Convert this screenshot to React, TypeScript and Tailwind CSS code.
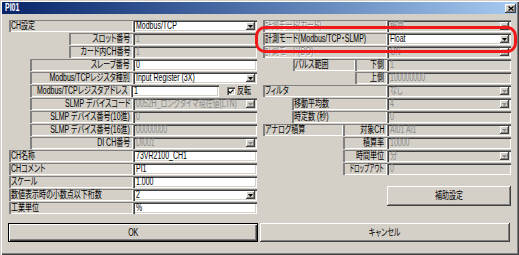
import type { ReactNode } from "react";

const sunken =
  "shadow-[inset_1px_1px_0_#808080,inset_2px_2px_0_#404040,inset_-1px_-1px_0_#ffffff,inset_-2px_-2px_0_#d4d0c8]";
const raised =
  "shadow-[inset_-1px_-1px_0_#404040,inset_1px_1px_0_#ffffff,inset_-2px_-2px_0_#808080]";
const panel = "shadow-[inset_2px_1px_0_#808080,inset_-1px_-1px_0_#ffffff]";

// the source screenshot is squeezed sideways, so every text run is narrowed
const T = ({
  children,
  align = "left",
  narrow = false,
  className = "",
}: {
  children: ReactNode;
  align?: "left" | "right" | "center";
  narrow?: boolean;
  className?: string;
}) => {
  const origin = align === "right" ? "origin-right" : align === "center" ? "origin-center" : "origin-left";
  return (
    <span className={`inline-block whitespace-nowrap ${narrow ? "scale-x-[0.56]" : "scale-x-[0.7]"} ${origin} ${className}`}>
      {children}
    </span>
  );
};

const Label = ({
  children,
  className = "",
  right = false,
  disabled = false,
  narrow = false,
}: {
  children: ReactNode;
  className?: string;
  right?: boolean;
  disabled?: boolean;
  narrow?: boolean;
}) => (
  <div
    className={`h-full flex items-center overflow-hidden ${panel} ${right ? "justify-end pr-[3px]" : "pl-[2px]"} ${
      disabled ? "text-[#808080] [text-shadow:1px_1px_0_#ffffff]" : ""
    } ${className}`}
  >
    <T align={right ? "right" : "left"} narrow={narrow}>
      {children}
    </T>
  </div>
);

const Field = ({ value, disabled = false, className = "w-[124px]" }: { value: string; disabled?: boolean; className?: string }) => (
  <div
    className={`h-full flex items-center pl-[3px] overflow-hidden ${sunken} ${
      disabled ? "bg-[#d4d0c8] text-[#8a8a8a]" : "bg-white"
    } ${className}`}
  >
    <T>{value}</T>
  </div>
);

const DropBtn = ({ disabled = false }: { disabled?: boolean }) => (
  <div className={`w-[9px] h-full shrink-0 flex items-center justify-center bg-[#d4d0c8] ${raised}`}>
    <svg width="5" height="3" viewBox="0 0 5 3">
      <polygon points="0,0 5,0 2.5,3" fill={disabled ? "#8a8a8a" : "#000000"} />
    </svg>
  </div>
);

const Select = ({ value, disabled = false, className = "w-[124px]" }: { value: string; disabled?: boolean; className?: string }) => (
  <div
    className={`h-full flex items-center pl-[3px] pr-[2px] py-[2px] ${sunken} ${
      disabled ? "bg-[#d4d0c8] text-[#8a8a8a]" : "bg-white"
    } ${className}`}
  >
    <div className="flex-1 min-w-0 overflow-hidden">
      <T>{value}</T>
    </div>
    <DropBtn disabled={disabled} />
  </div>
);

const Row = ({ children }: { children: ReactNode }) => <div className="h-[12px] flex shrink-0">{children}</div>;

export default function App() {
  return (
    <div className="relative w-[519px] h-[255px] overflow-hidden bg-[#d4d0c8] p-[2px] text-black text-[10px] leading-[12px] font-['Liberation_Sans','Noto_Sans_CJK_JP',sans-serif] [font-feature-settings:'palt'] shadow-[inset_1px_1px_0_#d4d0c8,inset_2px_2px_0_#ffffff,inset_-1px_-1px_0_#404040,inset_-2px_-2px_0_#808080]">
      <div className="h-[12px] flex items-center justify-between pl-[3px] pr-[1px] bg-linear-to-r from-[#0a246a] to-[#a6caf0]">
        <T className="font-bold text-white">PI01</T>
        <div className={`w-[11px] h-[9px] flex items-center justify-center bg-[#d4d0c8] ${raised}`}>
          <svg width="6" height="5" viewBox="0 0 6 5">
            <path d="M0.5 0.5 L5.5 4.5 M5.5 0.5 L0.5 4.5" stroke="#000" strokeWidth="1.3" />
          </svg>
        </div>
      </div>

      <div className="flex gap-[6px] pl-[7px] pt-[6px]">
        <div className="w-[248px] flex flex-col gap-[1px]">
          <Row>
            <Label className="w-[124px]">CH設定</Label>
            <Select value="Modbus/TCP" />
          </Row>
          <Row>
            <div className="w-[60px]" />
            <Label right className="w-[64px]">スロット番号</Label>
            <Field value="1" disabled />
          </Row>
          <Row>
            <div className="w-[60px]" />
            <Label right className="w-[64px]">カード内CH番号</Label>
            <Field value="1" disabled />
          </Row>
          <Row>
            <div className="w-[21px]" />
            <Label right className="w-[103px]">スレーブ番号</Label>
            <Field value="0" />
          </Row>
          <Row>
            <div className="w-[21px]" />
            <Label right className="w-[103px]">Modbus/TCPレジスタ種別</Label>
            <Select value="Input Register (3X)" />
          </Row>
          <Row>
            <div className="w-[21px]" />
            <Label right className="w-[103px]">Modbus/TCPレジスタアドレス</Label>
            <Field value="1" className="w-[90px]" />
            <div className="flex items-center ml-[8px] gap-[2px]">
              <div className={`w-[8px] h-[8px] bg-white flex items-center justify-center ${sunken}`}>
                <svg width="6" height="5" viewBox="0 0 6 5">
                  <path d="M0.5 2.2 L2.2 4 L5.5 0.6" stroke="#000" strokeWidth="1.2" fill="none" />
                </svg>
              </div>
              <T>反転</T>
            </div>
          </Row>
          <Row>
            <div className="w-[21px]" />
            <Label right className="w-[103px]">SLMP デバイスコード</Label>
            <Select value="0052H_ロングタイマ現在値(LTN)" disabled />
          </Row>
          <Row>
            <div className="w-[21px]" />
            <Label right className="w-[103px]">SLMP デバイス番号(10進)</Label>
            <Field value="0" disabled />
          </Row>
          <Row>
            <div className="w-[21px]" />
            <Label right className="w-[103px]">SLMP デバイス番号(16進)</Label>
            <Field value="00000000" disabled />
          </Row>
          <Row>
            <div className="w-[21px]" />
            <Label right className="w-[103px]">DI CH番号</Label>
            <Select value="DI001" disabled />
          </Row>
          <Row>
            <Label className="w-[124px]">CH名称</Label>
            <Field value="73VR2100_CH1" />
          </Row>
          <Row>
            <Label className="w-[124px]">CHコメント</Label>
            <Field value="PI1" />
          </Row>
          <Row>
            <Label className="w-[124px]">スケール</Label>
            <Field value="1.000" />
          </Row>
          <Row>
            <Label className="w-[124px]">数値表示時の小数点以下桁数</Label>
            <Select value="2" />
          </Row>
          <Row>
            <Label className="w-[124px]">工業単位</Label>
            <Field value="%" />
          </Row>
        </div>

        <div className="w-[248px] flex flex-col gap-[1px]">
          <Row>
            <Label disabled className="w-[124px]">計測モード(カード)</Label>
            <Select value="積算" disabled />
          </Row>
          <Row>
            <Label className="w-[124px]">計測モード(Modbus/TCP・SLMP)</Label>
            <Select value="Float" />
          </Row>
          <Row>
            <Label disabled className="w-[124px]">計測モード(DO)</Label>
            <Select value="ON" disabled />
          </Row>
          <Row>
            <div className="w-[30px]" />
            <Label className="w-[62px]">パルス範囲</Label>
            <Label right className="w-[32px]">下側</Label>
            <Field value="1" disabled />
          </Row>
          <Row>
            <div className="w-[92px]" />
            <Label right className="w-[32px]">上側</Label>
            <Field value="100000000" disabled />
          </Row>
          <Row>
            <Label className="w-[124px]">フィルタ</Label>
            <Select value="なし" disabled />
          </Row>
          <Row>
            <div className="w-[29px]" />
            <Label className="w-[95px]">移動平均数</Label>
            <Select value="4" disabled />
          </Row>
          <Row>
            <div className="w-[29px]" />
            <Label className="w-[95px]">時定数 (秒)</Label>
            <Field value="0" disabled />
          </Row>
          <Row>
            <Label className="w-[80px]">アナログ積算</Label>
            <Label right className="w-[44px]">対象CH</Label>
            <Select value="AI01 AI1" disabled />
          </Row>
          <Row>
            <div className="w-[80px]" />
            <Label right className="w-[44px]">積算率</Label>
            <Field value="10000" disabled />
          </Row>
          <Row>
            <div className="w-[80px]" />
            <Label right className="w-[44px]">時間単位</Label>
            <Select value="分" disabled />
          </Row>
          <Row>
            <div className="w-[80px]" />
            <Label right narrow className="w-[44px]">ドロップアウト</Label>
            <Field value="0" disabled />
          </Row>
          <button className={`mt-[10px] self-end w-[124px] h-[20px] flex items-center justify-center bg-[#d4d0c8] ${raised}`}>
            <T align="center">補助設定</T>
          </button>
        </div>
      </div>

      <div className="flex gap-[2px] ml-[6px] mt-[9px]">
        <button className="w-[250px] h-[19px] flex items-center justify-center bg-[#d4d0c8] shadow-[inset_0_0_0_1px_#000000,inset_2px_2px_0_#ffffff,inset_-2px_-2px_0_#404040,inset_-3px_-3px_0_#808080]">
          <T align="center">OK</T>
        </button>
        <button className={`w-[250px] h-[19px] flex items-center justify-center bg-[#d4d0c8] ${raised}`}>
          <T align="center">キャンセル</T>
        </button>
      </div>

      <div className="absolute left-[255px] top-[26px] w-[262px] h-[27px] rounded-[10px] border-[3px] border-[#f01818]" />
    </div>
  );
}
